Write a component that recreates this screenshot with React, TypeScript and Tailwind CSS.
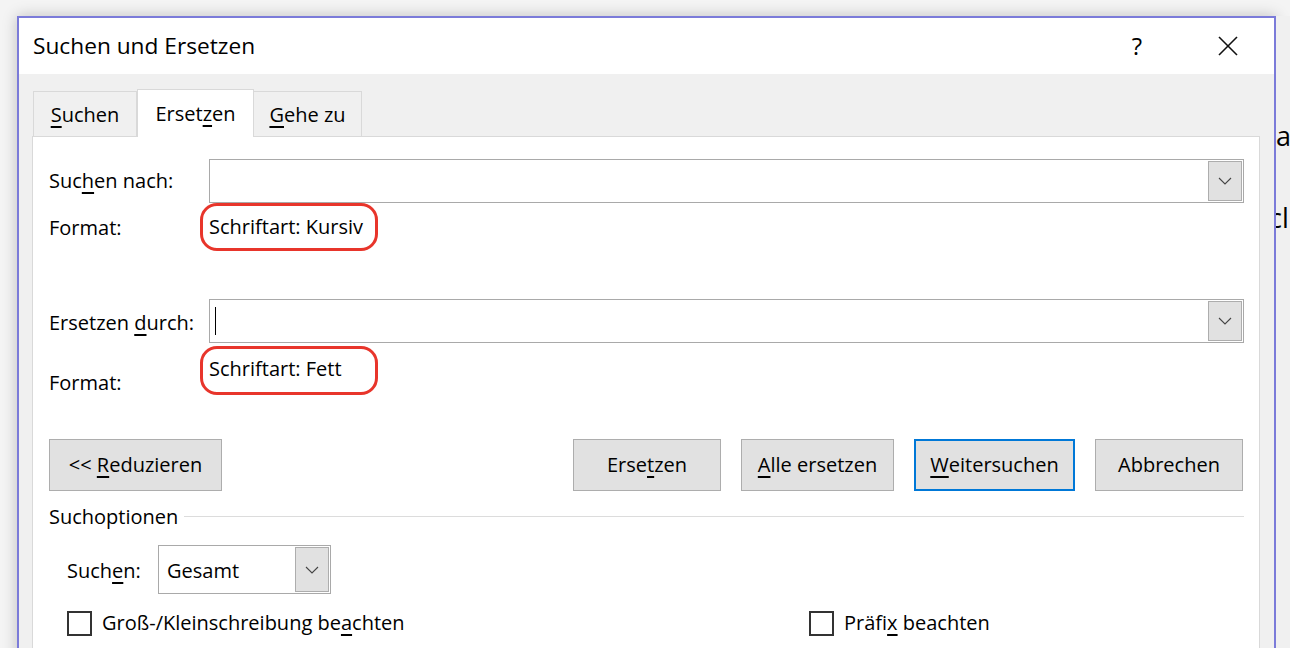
import React from "react";

const font = { fontFamily: '"Open Sans", "Noto Sans", "Liberation Sans", sans-serif' };

function Chevron() {
  return (
    <svg width="14" height="8" viewBox="0 0 14 8" className="block">
      <polyline points="1,1 7,7 13,1" fill="none" stroke="#444" strokeWidth="1.1" />
    </svg>
  );
}

function Combo({ caret }: { caret?: boolean }) {
  return (
    <div className="flex-1 h-[44px] border border-[#a9a9a9] bg-white flex items-stretch p-[1px]">
      <div className="flex-1 flex items-center pl-[4px]">
        {caret && <div className="w-[1px] h-[28px] bg-black" />}
      </div>
      <div className="w-[34px] bg-[#e1e1e1] border border-[#adadad] flex items-center justify-center">
        <Chevron />
      </div>
    </div>
  );
}

function Btn({ w, children, focus }: { w: string; children: React.ReactNode; focus?: boolean }) {
  return (
    <div
      className={
        "h-[52px] flex items-center justify-center bg-[#e1e1e1] text-[20px] text-black " +
        w +
        (focus ? " border-2 border-[#0078d7]" : " border border-[#adadad]")
      }
    >
      {children}
    </div>
  );
}

function U({ children }: { children: React.ReactNode }) {
  return <span className="underline decoration-[2px] underline-offset-[4px]">{children}</span>;
}

export default function App() {
  return (
    <div style={font} className="w-[1290px] h-[648px] overflow-hidden bg-[#f4f4f4] flex pt-[16px] pl-[17px] text-black">
      <div className="w-[1259px] h-[700px] shrink-0 border-2 border-[#7b7bd9] bg-[#f0f0f0] flex flex-col shadow-[0_0_14px_rgba(0,0,0,0.22)]">
        {/* Title bar */}
        <div className="h-[56px] bg-white flex items-center pl-[14px] pr-[36px]">
          <div className="text-[22.7px] leading-none flex-1">Suchen und Ersetzen</div>
          <div className="text-[24px] leading-none mr-[76px]">?</div>
          <svg width="20" height="20" viewBox="0 0 20 20" className="block">
            <line x1="1" y1="1" x2="19" y2="19" stroke="#111" strokeWidth="1.6" />
            <line x1="19" y1="1" x2="1" y2="19" stroke="#111" strokeWidth="1.6" />
          </svg>
        </div>
        {/* Tabs */}
        <div className="flex items-end pt-[15px] pl-[14px] relative z-10">
          <div className="w-[104px] h-[45px] border border-b-0 border-[#d9d9d9] bg-[#f0f0f0] flex items-center justify-center pt-[2px] text-[20px]">
            <span><U>S</U>uchen</span>
          </div>
          <div className="w-[117px] h-[48px] border border-b-0 border-[#d9d9d9] bg-white flex items-center justify-center text-[20px] mb-[-1px]">
            <span>Erset<U>z</U>en</span>
          </div>
          <div className="w-[108px] h-[45px] border border-b-0 border-l-0 border-[#d9d9d9] bg-[#f0f0f0] flex items-center justify-center pt-[2px] text-[20px]">
            <span><U>G</U>ehe zu</span>
          </div>
        </div>
        {/* Panel */}
        <div className="ml-[13px] mr-[14px] flex-1 border border-[#d9d9d9] bg-white pt-[22px] pl-[16px] pr-[15px] flex flex-col text-[20px]">
          <div className="flex items-center h-[44px]">
            <div className="w-[160px]">Suc<U>h</U>en nach:</div>
            <Combo />
          </div>
          <div className="flex items-center h-[48px]">
            <div className="w-[151px] pt-[2px]">Format:</div>
            <div className="w-[178px] h-[48px] rounded-[17px] border-[3px] border-[#e8352b] flex items-center pl-[6px]">
              Schriftart: Kursiv
            </div>
          </div>
          <div className="flex items-center h-[44px] mt-[48px]">
            <div className="w-[160px] pt-[4px]">Ersetzen <U>d</U>urch:</div>
            <Combo caret />
          </div>
          <div className="flex items-start h-[49px] mt-[3px]">
            <div className="w-[151px] pt-[23px] leading-[28px]">Format:</div>
            <div className="w-[178px] h-[49px] rounded-[17px] border-[3px] border-[#e8352b] flex items-center pl-[6px] pb-[3px]">
              Schriftart: Fett
            </div>
          </div>
          <div className="flex items-center mt-[44px]">
            <Btn w="w-[173px]">
              <span>&lt;&lt; <U>R</U>eduzieren</span>
            </Btn>
            <div className="flex-1" />
            <div className="flex gap-[20px] mr-[1px]">
              <Btn w="w-[148px]">
                <span>Erse<U>t</U>zen</span>
              </Btn>
              <Btn w="w-[153px]">
                <span><U>A</U>lle ersetzen</span>
              </Btn>
              <Btn w="w-[161px]" focus>
                <span><U>W</U>eitersuchen</span>
              </Btn>
              <Btn w="w-[148px]">
                <span>Abbrechen</span>
              </Btn>
            </div>
          </div>
          <div className="flex items-center h-[28px] mt-[12px]">
            <div className="leading-none">Suchoptionen</div>
            <div className="flex-1 h-[1px] bg-[#dcdcdc] ml-[6px] mt-[-2px]" />
          </div>
          <div className="flex items-center h-[49px] mt-[14px] pl-[18px]">
            <div className="w-[91px] pt-[2px]">Such<U>e</U>n:</div>
            <div className="w-[173px] h-[49px] border border-[#a9a9a9] flex items-stretch p-[1px]">
              <div className="flex-1 flex items-center pl-[7px] pt-[2px]">Gesamt</div>
              <div className="w-[34px] bg-[#e1e1e1] border border-[#adadad] flex items-center justify-center">
                <Chevron />
              </div>
            </div>
          </div>
          <div className="flex items-center h-[26px] mt-[16px] pl-[18px]">
            <div className="w-[742px] flex items-center">
              <div className="w-[25px] h-[25px] border-2 border-[#333] mr-[10px]" />
              <span>Groß-/Kleinschreibung be<U>a</U>chten</span>
            </div>
            <div className="flex items-center">
              <div className="w-[25px] h-[25px] border-2 border-[#333] mr-[10px]" />
              <span>Präfi<U>x</U> beachten</span>
            </div>
          </div>
        </div>
      </div>
      <div className="flex-1 overflow-hidden bg-[#f0f0f0] text-[27px] leading-none pt-[106px]">
        <div>a</div>
        <div className="mt-[55px] ml-[-7px]">cl</div>
      </div>
    </div>
  );
}
